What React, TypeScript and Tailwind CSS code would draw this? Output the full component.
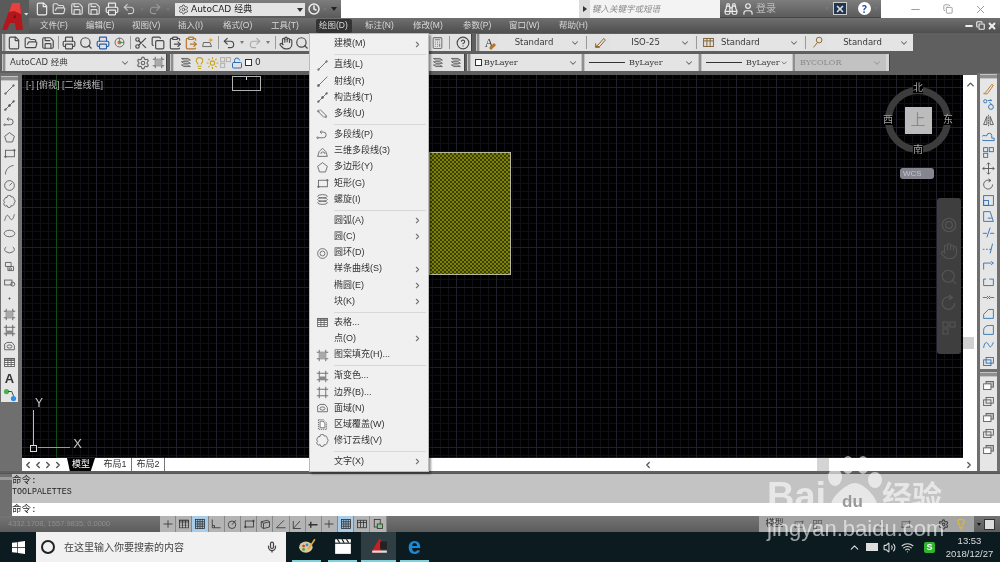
import React from "react";
import {
  File, FolderOpen, Save, Printer, Undo2, Redo2, Hand, Search, Scissors, Copy, ClipboardPaste, Lightbulb, Sun, Unlock,
  Settings, User, Binoculars, ChevronDown, ChevronRight, ChevronLeft, ChevronUp, Mic, Wifi, Volume2, Calculator, HelpCircle, X, Minus, Square, Clock,
} from "lucide-react";

const cjk = "font-['Liberation_Sans','Noto_Sans_CJK_SC',sans-serif]";
const deja = "font-['DejaVu_Sans','Noto_Sans_CJK_SC',sans-serif]";

// small cad glyphs, all on a 16x16 box
const glyphs: Record<string, React.ReactNode> = {
  line: <><path d="M3 13L13 3" /><circle cx="3" cy="13" r="1" /><circle cx="13" cy="3" r="1" /></>,
  ray: <><path d="M3 13L14 2" /><circle cx="3" cy="13" r="1.2" fill="currentColor" /></>,
  xline: <><path d="M2 14L14 2" /><circle cx="8" cy="8" r="1.2" fill="currentColor" /><circle cx="3" cy="13" r="1" /><circle cx="13" cy="3" r="1" /></>,
  mline: <><path d="M2 5l8 8M5 3l8 8" /><circle cx="3" cy="5" r="1" /><circle cx="12" cy="12" r="1" /></>,
  pline: <><path d="M3 12h6a3 3 0 0 0 0-7H6" /><path d="M7 3L5 5l2 2" /><circle cx="2" cy="12" r="1" /></>,
  poly3d: <><path d="M2 14l2-6 4-4 4 4 2 6z" /><path d="M6 11a2.5 2.5 0 0 1 5 0" /></>,
  polygon: <path d="M8 2l6 4.5-2.3 7H4.3L2 6.5z" />,
  rect: <><rect x="3" y="4" width="11" height="8" /><circle cx="3" cy="12" r="1" /><circle cx="14" cy="4" r="1" /></>,
  helix: <><ellipse cx="8" cy="4" rx="6" ry="2" /><ellipse cx="8" cy="8" rx="6" ry="2" /><ellipse cx="8" cy="12" rx="6" ry="2" /></>,
  donut: <><circle cx="8" cy="8" r="6" /><circle cx="8" cy="8" r="3" /></>,
  table: <><rect x="2" y="3" width="12" height="10" fill="#fff" /><rect x="2" y="3" width="12" height="2.5" fill="#999" /><path d="M6 3v10M10 3v10M2 8h12M2 10.500h12" /></>,
  hatch: <><path d="M4 1v14M12 1v14M1 4h14M1 12h14" /><rect x="4" y="4" width="8" height="8" fill="#aaa" stroke="none" /></>,
  grad: <><path d="M4 1v14M12 1v14M1 4h14M1 12h14" /><rect x="4" y="8" width="8" height="4" fill="#888" stroke="none" /></>,
  boundary: <path d="M4 1v14M12 1v14M1 4h14M1 12h14" />,
  region: <><path d="M2 5l3-2h6l3 4v5H2z" /><ellipse cx="8" cy="8" rx="3" ry="2" /></>,
  wipeout: <><path d="M3 2h6l4 4v8H3z" strokeDasharray="1.500 1" /><path d="M5 4h4l2 3v5H5z" fill="#fff" /></>,
  cloud: <path d="M5 3a2.500 2.500 0 0 1 5-0.500a2.500 2.500 0 0 1 3.500 3a2.500 2.500 0 0 1 0 4.500a2.500 2.500 0 0 1-3.500 3a2.500 2.500 0 0 1-5 0a2.500 2.500 0 0 1-3-4a2.500 2.500 0 0 1 0-4a2.500 2.500 0 0 1 3-2z" />,
  arc: <path d="M3 14C3 8 7 4 13 3" />,
  circle: <><circle cx="8" cy="8" r="6" /><path d="M8 8l3-3" /></>,
  spline: <path d="M2 12c2-8 4-8 6-4s4 4 6-4" />,
  ellipse: <ellipse cx="8" cy="8" rx="6.500" ry="4" />,
  earc: <path d="M4 5a6 4 0 1 0 8 0" />,
  block: <><path d="M3 3h7v5H3zM6 8h7v5H6z" /><circle cx="9" cy="11" r="1.500" /></>,
  insert: <><rect x="2" y="5" width="9" height="6" /><circle cx="12" cy="10" r="2.500" /></>,
  dot: <circle cx="8" cy="8" r="0.800" fill="currentColor" />,
  brush: <path d="M2 14c2 0 3-1 3-2l7-9 2 1-7 10c-1 1-3 1-5 0z" />,
  eraseCopy: <><circle cx="4" cy="4" r="2" /><circle cx="11" cy="11" r="3" /><path d="M7 3h5l-2-1M12 8l-3-3" /></>,
  mirror: <><path d="M8 1v14" strokeDasharray="2 1" /><path d="M6 3L2 13h4zM10 3l4 10h-4z" /></>,
  offset: <path d="M1 13h14v-3h-3V7a3 3 0 0 0-6 0H4a3 3 0 0 0-3 6z" />,
  array: <><rect x="2" y="2" width="5" height="5" /><rect x="9" y="2" width="5" height="5" /><rect x="2" y="9" width="5" height="5" /></>,
  move: <path d="M8 1v14M1 8h14M6 3l2-2 2 2M6 13l2 2 2-2M3 6L1 8l2 2M13 6l2 2-2 2" />,
  rotate: <><path d="M13 8a5.500 5.500 0 1 1-3-4.800" /><path d="M8 1l3 2-3 2" /></>,
  scale: <><rect x="2" y="8" width="6" height="6" /><rect x="2" y="2" width="12" height="12" /></>,
  stretch: <><path d="M2 2h8l4 12H2z" /><path d="M7 10h5" /></>,
  trim: <path d="M1 9h5M10 9h5M10 2L6 14" />,
  extend: <path d="M1 9h2M5 9h2M9 9h2M13 2l-3 12" />,
  breakA: <><path d="M2 13V5h9" /><path d="M11 3l3 2-3 2" /></>,
  breakB: <path d="M2 13V5h3M9 5h5v8H2" />,
  join: <path d="M1 8h5M10 8h5M6 6l2 2-2 2M10 6L8 8l2 2" />,
  chamfer: <path d="M2 14V9l6-6h6v11z" />,
  fillet: <path d="M2 14V9c0-4 3-6 7-6h5v11z" />,
  explode: <path d="M2 11c1-8 4-8 6-4s3 4 6-3" />,
  stack: <><rect x="5" y="3" width="9" height="7" /><rect x="2" y="6" width="9" height="7" /></>,
  stackB: <><rect x="5" y="3" width="9" height="7" fill="#bbb" /><rect x="2" y="6" width="9" height="7" fill="#fff" /></>,
  axis: <><path d="M3 14V3l-1 2M3 14h10" /></>,
  grid: <><rect x="2" y="2" width="12" height="12" /><path d="M5 2v12M8 2v12M11 2v12M2 5h12M2 8h12M2 11h12" /></>,
  ortho: <path d="M3 2v11h11M6 13v-3H3" />,
  snap: <><circle cx="8" cy="9" r="5" /><path d="M8 9l5-6" /></>,
  cube: <path d="M3 5l8-2 3 2v7l-8 2-3-2zM3 5l3 2v7M6 7l8-2" />,
  angle: <path d="M2 13h12M2 13L12 3" />,
  dyn: <path d="M3 14V4M3 14h10M3 14L12 4" />,
  plus: <path d="M8 3v10M2 8h12" />,
  lw: <path d="M2 9h12M5 5v8" strokeWidth="2" />,
  layers: <><rect x="3" y="2" width="8" height="10" /><rect x="7" y="8" width="7" height="6" fill="#7fc97f" /></>,
  dimEdit: <path d="M2 13l3-2 7-8 2 2-7 8zM2 9v5h5" />,
  tableEdit: <><rect x="2" y="3" width="12" height="10" /><path d="M2 6h12M6 3v10M10 3v10" /></>,
  mleader: <><circle cx="10" cy="5" r="3.500" /><path d="M8 8l-5 6" /></>,
  layerProp: <><path d="M3 3h8l3 2H6zM3 7h8l3 2H6zM3 11h8l3 2H6z" /></>,
  pie: <><circle cx="8" cy="8" r="5.500" /><circle cx="8" cy="8" r="2.500" fill="#e26a3a" stroke="none" /><path d="M8 2.500V8h5.500" stroke="#3a9a4a" /></>,
  tools: <><path d="M3 8h8l2 5H2z" /><path d="M12 2l1 2 2 1-2 1-1 2-1-2-2-1 2-1z" fill="#e8a33a" stroke="none" /></>,
};

function G({ n, s = 13, c = "text-[#5c5c5c]" }: { n: string; s?: number; c?: string }) {
  return (
    <svg viewBox="0 0 16 16" width={s} height={s} fill="none" stroke="currentColor" strokeWidth="1.100" className={`shrink-0 ${c}`}>
      {glyphs[n]}
    </svg>
  );
}

type Lucide = React.ComponentType<{ size?: number; strokeWidth?: number; className?: string }>;

function Tb({ i: I, w = "w-[16.700px]", c = "text-[#4a4a4a]" }: { i: Lucide; w?: string; c?: string }) {
  return (
    <div className={`${w} h-full flex items-center justify-center shrink-0`}>
      <I size={14} strokeWidth={2} className={c} />
    </div>
  );
}
function TbG({ n, c, w = "w-[16.700px]" }: { n: string; c?: string; w?: string }) {
  return (
    <div className={`${w} h-full flex items-center justify-center shrink-0`}>
      <G n={n} c={c} />
    </div>
  );
}
const Drop = () => (
  <div className="w-[10px] h-full flex items-center justify-center shrink-0">
    <div className="w-0 h-0 border-x-[2.500px] border-x-transparent border-t-[3px] border-t-[#777]" />
  </div>
);
const Sep = () => <div className="w-[5px] h-full flex items-center justify-center shrink-0"><div className="w-px h-[13px] bg-[#9a9a9a]" /></div>;
const Grip = () => <div className="w-[4px] h-full shrink-0 bg-[#8f8f8f] border-x border-[#c4c4c4]" />;

function Combo({ w, label, center, serif, dim, line }: { w: string; label: string; center?: boolean; serif?: boolean; dim?: boolean; line?: boolean }) {
  return (
    <div className={`${w} h-full shrink-0 flex items-center pr-1 ${dim ? "bg-[#c2c2c2]" : "bg-[#e4e4e4]"}`}>
      {line && <div className="w-[36px] h-px bg-[#333] ml-1 mr-1 shrink-0" />}
      <span className={`flex-1 whitespace-nowrap text-[8.500px] ${center ? "text-center" : line ? "" : "pl-1"} ${dim ? "text-[#8a8a8a]" : "text-[#3a3a3a]"} ${serif ? "font-['DejaVu_Serif',serif] text-[8px]" : deja}`}>
        {label}
      </span>
      <ChevronDown size={10} strokeWidth={2.500} className={dim ? "text-[#9a9a9a]" : "text-[#666]"} />
    </div>
  );
}

function TopBar() {
  const menus = [
    ["文件(F)", "w-[46px]"], ["编辑(E)", "w-[46px]"], ["视图(V)", "w-[46px]"], ["插入(I)", "w-[45px]"], ["格式(O)", "w-[48px]"], ["工具(T)", "w-[45px]"],
  ];
  const menus2 = [["标注(N)", "w-[48px]"], ["修改(M)", "w-[50px]"], ["参数(P)", "w-[46px]"], ["窗口(W)", "w-[50px]"], ["帮助(H)", "w-[50px]"]];
  return (
    <div className="h-[33px] flex shrink-0">
      <div className="w-[29px] h-full bg-[#5a5a5a] relative shrink-0">
        <svg viewBox="0 0 29 33" className="w-full h-full">
          <path d="M2 30L12 3h8l3 27h-7l-1-7h-5l-3 7z" fill="#b3161b" />
          <path d="M12 3h8l1 11-7-3-5 1z" fill="#e8403f" />
          <path d="M13.500 18h2l-.3-4z" fill="#5a1010" />
          <path d="M24 13h4.500l-2.200 2.500z" fill="#ddd" />
        </svg>
      </div>
      <div className="flex-1 flex flex-col min-w-0">
        <div className="h-[18px] flex bg-gradient-to-b from-[#7d7d7d] to-[#5a5a5a]">
          <div className="w-[146px] flex items-center pl-[4px] shrink-0">
            <Tb i={File} w="w-[17.500px]" c="text-[#eee]" />
            <Tb i={FolderOpen} w="w-[17.500px]" c="text-[#ddd]" />
            <Tb i={Save} w="w-[17.500px]" c="text-[#ddd]" />
            <Tb i={Save} w="w-[17.500px]" c="text-[#ddd]" />
            <Tb i={Printer} w="w-[17.500px]" c="text-[#eee]" />
            <Tb i={Undo2} w="w-[16px]" c="text-[#ccc]" />
            <Drop />
            <Tb i={Redo2} w="w-[16px]" c="text-[#999]" />
            <Drop />
          </div>
          <div className="w-[130px] h-[13px] mt-[3px] bg-[#e4e4e4] flex items-center shrink-0 pl-[3px] pr-[2px]">
            <Settings size={11} strokeWidth={2} className="text-[#555]" />
            <span className={`ml-[2px] flex-1 text-[9px] leading-none text-[#222] whitespace-nowrap ${deja}`}>AutoCAD 经典</span>
            <div className="w-0 h-0 border-x-[3px] border-x-transparent border-t-[4px] border-t-[#333]" />
          </div>
          <div className="w-[36px] shrink-0 flex items-center pl-[3px]">
            <Clock size={12} strokeWidth={3} className="text-[#eee]" />
            <Drop />
            <div className="w-0 h-0 ml-[1px] border-x-[3px] border-x-transparent border-t-[4px] border-t-[#222]" />
          </div>
          <div className="w-[238px] bg-white shrink-0" />
          <div className="w-[11px] bg-[#ddd] shrink-0 flex items-center justify-center">
            <div className="w-0 h-0 border-y-[3px] border-y-transparent border-l-[4px] border-l-[#333]" />
          </div>
          <div className={`w-[130px] shrink-0 bg-[#f3f3f3] flex items-center pl-[2px] text-[8.500px] italic text-[#888] whitespace-nowrap ${cjk}`}>键入关键字或短语</div>
          <div className="w-[161px] shrink-0 flex items-center pl-[2px] border-b border-[#444]">
            <Tb i={Binoculars} w="w-[17px]" c="text-[#eee]" />
            <Tb i={User} w="w-[17px]" c="text-[#eee]" />
            <span className={`w-[66px] text-[10px] text-[#bbb] ${cjk}`}>登录</span>
            <Drop />
            <div className="w-[14px] h-[13px] ml-[1px] bg-[#1f3550] border border-[#ccc] flex items-center justify-center shrink-0">
              <X size={10} strokeWidth={4} className="text-[#ddd]" />
            </div>
            <div className="ml-[11px] w-[13px] h-[13px] rounded-full bg-white flex items-center justify-center shrink-0 text-[10px] font-bold leading-none text-[#1f4fa8]">?</div>
            <Drop />
          </div>
          <div className="flex-1 bg-white flex items-center justify-around text-[#999] pl-[18px] pr-[3px]">
            <Minus size={13} strokeWidth={1.800} />
            <Copy size={10} strokeWidth={2.200} />
            <X size={13} strokeWidth={1.800} />
          </div>
        </div>
        <div className={`h-[15px] flex items-center bg-gradient-to-b from-[#6f6f6f] to-[#4f4f4f] pl-[11px] text-[8.500px] text-[#d8d8d8] whitespace-nowrap ${cjk}`}>
          {menus.map(([t, w]) => <div key={t} className={`${w} shrink-0`}>{t}</div>)}
          <div className="w-[36px] h-[14px] shrink-0 bg-[#333] rounded-[2px] flex items-center pl-[3px]">绘图(D)</div>
          <div className="w-[13px] shrink-0" />
          {menus2.map(([t, w]) => <div key={t} className={`${w} shrink-0`}>{t}</div>)}
          <div className="flex-1 flex items-center justify-end gap-[2px] pr-[3px] text-[#eee]">
            <Minus size={10} strokeWidth={4.500} />
            <Copy size={9} strokeWidth={3} />
            <X size={10} strokeWidth={4.500} />
          </div>
        </div>
      </div>
    </div>
  );
}

function ToolRow1() {
  return (
    <div className="h-[17px] mt-px flex shrink-0 pl-[2px]">
      <div className="w-[470px] h-full bg-[#e2e2e2] flex items-center shrink-0 border-r border-[#444]">
        <Grip />
        <Tb i={File} /><Tb i={FolderOpen} /><Tb i={Save} />
        <Sep />
        <Tb i={Printer} /><Tb i={Search} /><Tb i={Printer} c="text-[#2a5fa8]" /><TbG n="pie" />
        <Sep />
        <Tb i={Scissors} /><Tb i={Copy} /><Tb i={ClipboardPaste} /><Tb i={ClipboardPaste} c="text-[#b5762a]" /><TbG n="tools" />
        <Sep />
        <Tb i={Undo2} w="w-[16px]" /><Drop /><Tb i={Redo2} w="w-[16px]" c="text-[#aaa]" /><Drop />
        <Sep />
        <Tb i={Hand} w="w-[16px]" /><Tb i={Search} w="w-[16px]" />
        <div className="flex-1" />
        <Tb i={Calculator} w="w-[13px]" c="text-[#777]" />
        <div className="w-[10px] flex justify-center h-full items-center"><div className="w-px h-[13px] bg-[#999]" /></div>
        <Tb i={HelpCircle} w="w-[17px]" />
      </div>
      <div className="w-[4px] shrink-0" />
      <div className="w-[436px] h-full bg-[#e2e2e2] flex items-center shrink-0 border-r border-[#444]">
        <Grip />
        <div className="w-[18px] h-full shrink-0 flex items-center justify-center relative">
          <span className="text-[12px] leading-none text-[#333] font-['Liberation_Serif',serif]">A</span>
          <div className="absolute right-[2px] bottom-[3px] w-[7px] h-[3px] bg-[#b5762a] -rotate-45" />
        </div>
        <Combo w="w-[86px]" label="Standard" center />
        <Sep />
        <TbG n="dimEdit" w="w-[22px]" c="text-[#8a5a1a]" />
        <Combo w="w-[83px]" label="ISO-25" center />
        <Sep />
        <TbG n="tableEdit" w="w-[18px]" c="text-[#7a5a2a]" />
        <Combo w="w-[86px]" label="Standard" />
        <Sep />
        <TbG n="mleader" w="w-[18px]" c="text-[#8a5a1a]" />
        <Combo w="w-[87px]" label="Standard" center />
      </div>
    </div>
  );
}

function ToolRow2() {
  return (
    <div className="h-[17px] mt-[3px] flex shrink-0 pl-[2px]">
      <div className="w-[165px] h-full bg-[#e2e2e2] flex items-center shrink-0 border-r border-[#444]">
        <Grip />
        <Combo w="w-[128px]" label="AutoCAD 经典" />
        <Tb i={Settings} w="w-[17px]" c="text-[#666]" />
        <TbG n="hatch" w="w-[15px]" />
      </div>
      <div className="w-[3px] shrink-0" />
      <div className="w-[295px] h-full bg-[#e2e2e2] flex items-center shrink-0 border-r border-[#444]">
        <Grip />
        <div className="w-[4px]" />
        <TbG n="layerProp" w="w-[15px]" />
        <Tb i={Lightbulb} w="w-[13px]" c="text-[#c9a21a]" />
        <Tb i={Sun} w="w-[13px]" c="text-[#c9a21a]" />
        <TbG n="array" w="w-[12px]" c="text-[#aaa]" />
        <Tb i={Unlock} w="w-[12px]" c="text-[#2a6fb5]" />
        <div className="w-[7px] h-[7px] ml-[2px] bg-white border border-[#333] shrink-0" />
        <span className={`ml-[3px] text-[9px] text-[#333] ${deja}`}>0</span>
        <div className="flex-1" />
        <TbG n="layerProp" w="w-[18px]" />
        <TbG n="layerProp" w="w-[18px]" />
      </div>
      <div className="w-[2px] shrink-0" />
      <div className="w-[423px] h-full bg-[#d4d4d4] flex items-center shrink-0 border-r border-[#444]">
        <Grip />
        <div className="w-[110px] h-full shrink-0 bg-[#e4e4e4] flex items-center pl-[4px] pr-[3px]">
          <div className="w-[7px] h-[7px] bg-white border border-[#333] shrink-0" />
          <span className="flex-1 ml-[2px] text-[8px] text-[#333] font-['DejaVu_Serif',serif]">ByLayer</span>
          <ChevronDown size={10} strokeWidth={2.500} className="text-[#666]" />
        </div>
        <Grip />
        <Combo w="w-[113px]" label="ByLayer" line serif />
        <Grip />
        <Combo w="w-[90px]" label="ByLayer" line serif />
        <Grip />
        <Combo w="w-[90px]" label="BYCOLOR" serif dim />
      </div>
    </div>
  );
}

const leftTools = ["line", "xline", "pline", "polygon", "rect", "arc", "circle", "cloud", "spline", "ellipse", "earc", "block", "insert", "dot", "hatch", "grad", "region", "table", "A", "points"];
const rightTools = ["brush", "eraseCopy", "mirror", "offset", "array", "move", "rotate", "scale", "stretch", "trim", "extend", "breakA", "breakB", "join", "chamfer", "fillet", "explode", "stack"];
const blueTools = new Set(["eraseCopy", "offset", "array", "scale", "stretch", "trim", "extend", "breakA", "breakB", "join", "chamfer", "fillet", "explode", "stack"]);

function LeftBar() {
  return (
    <div className="w-[22px] shrink-0 bg-[#6f6f6f] pt-[3px] pl-px">
      <div className="w-[17px] h-[326px] bg-[#e6e6e6]">
        <div className="h-[5px] bg-[#8f8f8f] border-y border-[#c4c4c4]" />
        {leftTools.map((n) => (
          <div key={n} className="h-[16.100px] flex items-center justify-center">
            {n === "A" ? <span className="text-[13px] font-bold leading-none text-[#333] font-['Liberation_Sans',sans-serif]">A</span>
              : n === "points" ? (
                <svg viewBox="0 0 16 16" width="14" height="14"><circle cx="4" cy="4" r="3" fill="#4caf50" /><circle cx="12" cy="12" r="3" fill="#2f8fe0" /><path d="M6 4h4l2 5" fill="none" stroke="#333" /></svg>
              ) : <G n={n} />}
          </div>
        ))}
      </div>
    </div>
  );
}

function RightBar() {
  return (
    <div className="w-[23px] shrink-0 bg-[#6f6f6f] pt-px pl-[3px] flex flex-col gap-[3px]">
      <div className="w-[17px] h-[295px] bg-[#e6e6e6] shrink-0">
        <div className="h-[5px] bg-[#8f8f8f] border-y border-[#c4c4c4]" />
        <div className="h-[1px]" />
        {rightTools.map((n) => (
          <div key={n} className="h-[16.100px] flex items-center justify-center">
            <G n={n} c={blueTools.has(n) ? "text-[#2a6fb5]" : n === "brush" ? "text-[#b5762a]" : "text-[#555]"} />
          </div>
        ))}
      </div>
      <div className="w-[17px] flex-1 bg-[#e6e6e6]">
        <div className="h-[5px] bg-[#8f8f8f] border-y border-[#c4c4c4]" />
        {["stackB", "stack", "stackB", "stack", "stackB"].map((n, i) => (
          <div key={i} className="h-[16.100px] flex items-center justify-center"><G n={n} /></div>
        ))}
      </div>
    </div>
  );
}

function Canvas() {
  return (
    <div className="flex-1 relative overflow-hidden bg-black bg-[linear-gradient(#20202c_1px,transparent_1px),linear-gradient(90deg,#20202c_1px,transparent_1px),linear-gradient(#0e0e14_1px,transparent_1px),linear-gradient(90deg,#0e0e14_1px,transparent_1px)] bg-[size:40px_40px,40px_40px,8px_8px,8px_8px] bg-[position:0_12px,34px_0,0_4px,2px_0]">
      <div className="absolute left-[34px] top-0 bottom-0 w-px bg-[#0e4d14]" />
      <div className="absolute left-[34px] right-0 bottom-0 h-px bg-[#4a0f0f]" />
      <div className={`absolute left-[4px] top-[4px] text-[9px] text-[#b5b5b5] whitespace-nowrap ${cjk}`}>[-] [俯视] [二维线框]</div>
      <div className="absolute left-[210px] top-[1px] w-[29px] h-[15px] border border-[#b0b0b0] flex justify-center">
        <div className="w-px h-[3px] bg-[#ddd]" />
      </div>
      {/* hatch block */}
      <div className="absolute left-[407px] top-[77px] w-[82px] h-[123px] border border-[#b8b8a0] bg-[repeating-conic-gradient(#7e8400_0%_25%,#3c3f00_0%_50%)] bg-[size:4px_4px]" />
      {/* view cube */}
      <div className="absolute left-[863px] top-[12px] w-[66px] h-[66px] rounded-full border-[7px] border-[#3c3c3c] flex items-center justify-center">
        <div className={`w-[27px] h-[27px] bg-[#bcbcbc] flex items-center justify-center text-[15px] text-[#8a8a8a] ${cjk}`}>上</div>
      </div>
      <span className={`absolute left-[891px] top-[8px] text-[10px] text-[#a5a5a5] bg-black leading-none ${cjk}`}>北</span>
      <span className={`absolute left-[891px] top-[70px] text-[10px] text-[#a5a5a5] bg-black leading-none ${cjk}`}>南</span>
      <span className={`absolute left-[861px] top-[40px] text-[10px] text-[#a5a5a5] bg-black leading-none ${cjk}`}>西</span>
      <span className={`absolute left-[921px] top-[40px] text-[10px] text-[#a5a5a5] bg-black leading-none ${cjk}`}>东</span>
      <div className="absolute left-[878px] top-[93px] w-[34px] h-[11px] rounded-[3px] bg-[#85858f] text-[#c5c5cc] text-[8px] leading-[11px] pl-[3px] font-['Liberation_Sans',sans-serif]">WCS</div>
      {/* nav bar */}
      <div className="absolute left-[915px] top-[123px] w-[24px] h-[156px] rounded-[3px] bg-[#3e3e3e] flex flex-col items-center justify-around py-[14px] text-[#555]">
        <G n="donut" s={18} c="text-[#555]" />
        <Hand size={18} strokeWidth={1.500} />
        <Search size={18} strokeWidth={1.500} />
        <G n="rotate" s={18} c="text-[#555]" />
        <G n="array" s={16} c="text-[#555]" />
      </div>
      {/* ucs */}
      <div className="absolute left-[8px] bottom-[6px] w-[50px] h-[60px] text-[#c8c8c8]">
        <span className="absolute left-[5px] top-[5px] text-[12px] leading-none font-['Liberation_Sans',sans-serif]">Y</span>
        <div className="absolute left-[3px] top-[18px] bottom-[6px] w-px bg-[#bbb]" />
        <div className="absolute left-[8px] right-[10px] bottom-[4px] h-px bg-[#999]" />
        <div className="absolute left-0 bottom-0 w-[7px] h-[7px] border border-[#ddd]" />
        <span className="absolute right-[-2px] bottom-[2px] text-[13px] leading-none font-['Liberation_Sans',sans-serif]">X</span>
      </div>
    </div>
  );
}

function Tabs() {
  const nav = [ChevronLeft, ChevronLeft, ChevronRight, ChevronRight];
  return (
    <div className={`h-[13px] flex items-center bg-white shrink-0 text-[9px] text-[#333] ${cjk}`}>
      <div className="w-[45px] flex items-center pl-[1px] shrink-0">
        {nav.map((I, i) => <div key={i} className="w-[10px] flex justify-center"><I size={10} strokeWidth={3.500} className="text-[#555]" /></div>)}
      </div>
      <div className="w-[28px] h-full bg-black text-white text-center [clip-path:polygon(0_0,100%_0,85%_100%,10%_100%)] shrink-0">模型</div>
      <div className="w-[33px] text-center shrink-0 ml-[4px] border-r border-[#777]">布局1</div>
      <div className="w-[33px] text-center shrink-0 border-r border-[#777]">布局2</div>
      <div className="w-[478px] shrink-0" />
      <ChevronLeft size={10} strokeWidth={3} className="text-[#555] shrink-0" />
      <div className="flex-1 relative h-full">
        <div className="absolute left-[164px] top-0 w-[12px] h-full bg-[#d4d4d4]" />
      </div>
      <ChevronRight size={10} strokeWidth={3} className="text-[#555] shrink-0 mr-[3px]" />
    </div>
  );
}

type Item = { t?: string; g?: string; more?: boolean; sep?: boolean };
const menuItems: Item[] = [
  { t: "建模(M)", more: true }, { sep: true },
  { t: "直线(L)", g: "line" }, { t: "射线(R)", g: "ray" }, { t: "构造线(T)", g: "xline" }, { t: "多线(U)", g: "mline" }, { sep: true },
  { t: "多段线(P)", g: "pline" }, { t: "三维多段线(3)", g: "poly3d" }, { t: "多边形(Y)", g: "polygon" }, { t: "矩形(G)", g: "rect" }, { t: "螺旋(I)", g: "helix" }, { sep: true },
  { t: "圆弧(A)", more: true }, { t: "圆(C)", more: true }, { t: "圆环(D)", g: "donut" }, { t: "样条曲线(S)", more: true }, { t: "椭圆(E)", more: true }, { t: "块(K)", more: true }, { sep: true },
  { t: "表格...", g: "table" }, { t: "点(O)", more: true }, { t: "图案填充(H)...", g: "hatch" }, { sep: true },
  { t: "渐变色...", g: "grad" }, { t: "边界(B)...", g: "boundary" }, { t: "面域(N)", g: "region" }, { t: "区域覆盖(W)", g: "wipeout" }, { t: "修订云线(V)", g: "cloud" }, { sep: true },
  { t: "文字(X)", more: true },
];

function DrawMenu() {
  return (
    <div className={`absolute left-[309px] top-[33px] w-[120px] h-[439px] bg-[#f0f0f0] border border-[#bbb] shadow-[2px_2px_2px_rgba(0,0,0,0.4)] pt-[2px] text-[9px] text-[#333] ${cjk}`}>
      {menuItems.map((m, i) =>
        m.sep ? (
          <div key={i} className="h-[4.900px] pl-[24px] pr-[2px] flex items-center"><div className="h-px w-full bg-[#d8d8d8]" /></div>
        ) : (
          <div key={i} className="h-[16.200px] flex items-center">
            <div className="w-[24px] flex justify-center shrink-0">{m.g && <G n={m.g} s={13} c="text-[#666]" />}</div>
            <span className="flex-1 whitespace-nowrap">{m.t}</span>
            {m.more && <ChevronRight size={9} strokeWidth={3} className="text-[#777] mr-[6px]" />}
          </div>
        ),
      )}
    </div>
  );
}

function CommandArea() {
  const mono = "font-['Liberation_Mono','Noto_Sans_CJK_SC',monospace]";
  return (
    <div className="h-[43px] mt-[2px] flex shrink-0 bg-[#6f6f6f] border-t border-[#555]">
      <div className="w-[12px] shrink-0 pt-[3px]"><div className="h-[3px] bg-[#999]" /></div>
      <div className="flex-1 flex flex-col text-[#222]">
        <div className={`flex-1 bg-[#c3c3c3] pt-[1px] text-[8.300px] leading-[11px] ${mono}`}>
          <div className="text-[9.500px]">命令:</div>
          <div>TOOLPALETTES</div>
        </div>
        <div className={`h-[13px] bg-white text-[9.500px] leading-[13px] ${mono}`}>命令:</div>
      </div>
    </div>
  );
}

function StatusBar() {
  const btns = ["plus", "table", "grid", "ortho", "snap", "rect", "cube", "angle", "dyn", "lw", "plus", "grid", "tableEdit", "layers"];
  return (
    <div className="h-[16px] flex items-center bg-gradient-to-b from-[#747474] to-[#5c5c5c] shrink-0 relative">
      <div className="w-[160px] pl-[8px] text-[7.500px] text-[#8e8e8e] font-['Liberation_Sans',sans-serif] whitespace-nowrap shrink-0">4332.1708, 1557.9835, 0.0000</div>
      {btns.map((n, i) => (
        <div key={i} className={`w-[16.200px] h-full flex items-center justify-center shrink-0 border-r border-[#888] ${i === 2 || i === 11 ? "bg-[#a9cde8]" : "bg-[#b4b4b4]"}`}>
          <G n={n} s={12} c="text-[#333]" />
        </div>
      ))}
      <div className="w-[372px] shrink-0" />
      <div className="w-[215px] h-full bg-[#a4a4a4] flex items-center shrink-0 text-[9px] text-[#333]">
        <span className={`w-[32px] text-center ${cjk}`}>模型</span>
        <div className="w-[2px] h-full" />
        <G n="rect" s={11} /><div className="w-[8px]" /><G n="array" s={11} />
        <div className="w-[52px]" />
        <G n="angle" s={11} /><div className="w-[14px]" /><G n="rect" s={11} />
        <div className="flex-1" />
        <Settings size={11} strokeWidth={2.500} className="text-[#444] mr-[6px]" />
        <Lightbulb size={12} strokeWidth={2.500} className="text-[#e0b92e] mr-[7px]" />
      </div>
      <div className="w-[10px] shrink-0 flex justify-center"><div className="w-0 h-0 border-x-[2.500px] border-x-transparent border-t-[3px] border-t-[#111]" /></div>
      <div className="w-[11px] h-[11px] bg-[#ddd] border border-[#333] shrink-0" />
    </div>
  );
}

function Taskbar() {
  return (
    <div className="flex-1 bg-[#0b1b1f] flex items-center">
      <div className="w-[36px] h-full flex items-center justify-center shrink-0">
        <svg viewBox="0 0 16 16" width="13" height="13" fill="#fff"><path d="M0 2.300l6.500-.9V7.500H0zM7.300 1.300L16 0v7.500H7.300zM0 8.300h6.500v6.200L0 13.700zM7.300 8.300H16V16l-8.700-1.200z" /></svg>
      </div>
      <div className={`w-[250px] h-full bg-[#f1f1f1] flex items-center shrink-0 pl-[5px] text-[10px] text-[#444] ${cjk}`}>
        <div className="w-[14px] h-[14px] rounded-full border-[2px] border-[#222] shrink-0" />
        <span className="ml-[9px] flex-1 whitespace-nowrap">在这里输入你要搜索的内容</span>
        <Mic size={12} strokeWidth={2.500} className="text-[#444] mr-[8px]" />
      </div>
      <div className="w-[6px] shrink-0" />
      <div className="w-[29px] h-full shrink-0 flex items-center justify-center border-b-2 border-[#7fd1de]">
        <svg viewBox="0 0 16 16" width="18" height="18"><ellipse cx="7" cy="9" rx="6" ry="5" fill="#d8c8a0" /><circle cx="5" cy="8" r="1.200" fill="#d33" /><circle cx="8" cy="7" r="1.200" fill="#38c" /><circle cx="5" cy="11" r="1.200" fill="#3a3" /><path d="M9 11l6-9" stroke="#e8a33a" strokeWidth="1.500" /></svg>
      </div>
      <div className="w-[7px] shrink-0" />
      <div className="w-[29px] h-full shrink-0 flex items-center justify-center border-b-2 border-[#7fd1de]">
        <svg viewBox="0 0 16 16" width="18" height="18"><rect x="1" y="6" width="14" height="9" fill="#fff" /><path d="M1 2h14v3H1z" fill="#fff" /><path d="M3 2l2 3M7 2l2 3M11 2l2 3" stroke="#111" /></svg>
      </div>
      <div className="w-[4px] shrink-0" />
      <div className="w-[35px] h-full shrink-0 flex items-center justify-center bg-[#2f3e42] border-b-2 border-[#7fd1de]">
        <svg viewBox="0 0 16 16" width="18" height="18"><path d="M1 14L8 2h2v12z" fill="#c81e25" /><rect x="9" y="4" width="6" height="7" fill="#222" /><rect x="2" y="12" width="13" height="2" fill="#ddd" /></svg>
      </div>
      <div className="w-[4px] shrink-0" />
      <div className="w-[29px] h-full shrink-0 flex items-center justify-center border-b-2 border-[#7fd1de]">
        <span className="text-[24px] leading-none font-bold text-[#1a8ad8] font-['Liberation_Sans',sans-serif]">e</span>
      </div>
      <div className="flex-1" />
      <div className="flex items-center text-[#ddd] shrink-0">
        <ChevronUp size={13} strokeWidth={2} />
        <div className="w-[12px] h-[8px] ml-[5px] bg-[#ddd] border border-[#ddd]" />
        <Volume2 size={13} strokeWidth={2} className="ml-[5px]" />
        <Wifi size={13} strokeWidth={2} className="ml-[5px]" />
        <div className={`w-[11px] h-[11px] ml-[10px] bg-[#2fb52f] rounded-[2px] text-[9px] leading-[11px] text-center font-bold text-white ${cjk}`}>S</div>
      </div>
      <div className="w-[65px] pl-[4px] shrink-0 text-[9.500px] leading-[13px] text-[#ddd] text-center font-['Liberation_Sans',sans-serif]">
        <div>13:53</div>
        <div>2018/12/27</div>
      </div>
    </div>
  );
}

function Watermark() {
  return (
    <div className={`absolute left-[765px] top-[455px] w-[185px] h-[85px] text-white/60 pointer-events-none ${cjk}`}>
      <svg viewBox="0 0 185 85" className="absolute inset-0 w-full h-full" fill="currentColor">
        <ellipse cx="70" cy="22" rx="7" ry="9" />
        <ellipse cx="83" cy="10" rx="6" ry="9" />
        <ellipse cx="98" cy="10" rx="6" ry="9" />
        <ellipse cx="110" cy="25" rx="7" ry="8" />
        <path d="M90 28c8 0 22 14 22 22s-8 8-22 8-24 0-24-8 16-22 24-22z" />
      </svg>
      <span className="absolute left-[2px] top-[22px] text-[38px] leading-none font-bold font-['Liberation_Sans',sans-serif]">Bai</span>
      <span className="absolute left-[77px] top-[38px] text-[17px] leading-none font-bold text-[#9a9a9a] font-['Liberation_Sans',sans-serif]">du</span>
      <span className="absolute left-[117px] top-[27px] text-[30px] leading-none font-bold">经验</span>
      <span className="absolute left-[2px] top-[63px] text-[22px] leading-none whitespace-nowrap font-['Liberation_Sans',sans-serif]">jingyan.baidu.com</span>
    </div>
  );
}

export default function App() {
  return (
    <div className="w-[1000px] h-[562px] relative overflow-hidden bg-[#5f5f5f] flex flex-col blur-[0.3px]">
      <TopBar />
      <ToolRow1 />
      <ToolRow2 />
      <div className="h-[398px] mt-[2px] flex shrink-0">
        <LeftBar />
        <div className="flex-1 flex flex-col min-w-0 pt-[2px]">
          <div className="flex-1 flex min-h-0">
            <Canvas />
            <div className="w-[14px] bg-white shrink-0 relative flex justify-center pt-[4px]">
              <ChevronUp size={11} strokeWidth={3} className="text-[#555]" />
              <div className="absolute left-0 top-[262px] w-[11px] h-[12px] bg-[#d0d0d0]" />
            </div>
          </div>
          <Tabs />
        </div>
        <RightBar />
      </div>
      <CommandArea />
      <StatusBar />
      <Taskbar />
      <DrawMenu />
      <Watermark />
    </div>
  );
}
